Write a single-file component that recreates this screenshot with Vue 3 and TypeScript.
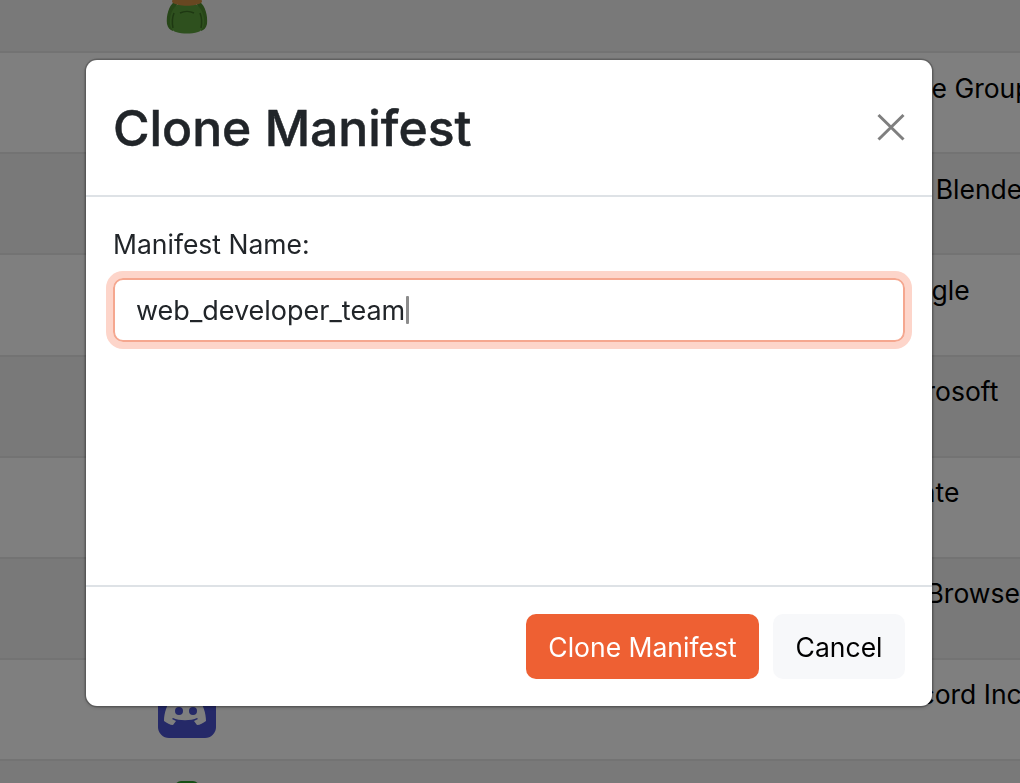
<script setup lang="ts">
interface Row {
  name: string
  icon?: 'frog' | 'discord' | 'green'
}

const rows: Row[] = [
  { name: '', icon: 'frog' },
  { name: 'Code Group' },
  { name: 'The Blender' },
  { name: 'Google' },
  { name: 'Microsoft' },
  { name: 'Monte' },
  { name: 'UC Browser' },
  { name: 'Discord Inc', icon: 'discord' },
  { name: '', icon: 'green' },
]
</script>

<template>
  <div class="page">
    <div class="table">
      <div v-for="(row, i) in rows" :key="i" class="row">
        <div class="icon-cell">
          <svg v-if="row.icon === 'frog'" class="app-icon frog" viewBox="0 0 58 62" aria-hidden="true">
            <path d="M16 30c-5 4-8 13-7 22 1 4 3 6 6 7l4-27z M42 30c5 4 8 13 7 22-1 4-3 6-6 7l-4-27z" fill="#4e8c30" />
            <path d="M29 30c-10 0-16 7-17 17-1 7 2 12 6 13 7 2 15 2 22 0 4-1 7-6 6-13-1-10-7-17-17-17z" fill="#5ca03c" />
            <path d="M16 41c-2 5-2 10-1 15M42 41c2 5 2 10 1 15M22 41c4-2 10-2 14 0" stroke="#3c7024" stroke-width="1.5" fill="none" />
            <path d="M15 24h28l1 6c-5 5-25 5-30 0z" fill="#d08e42" />
          </svg>
          <svg v-else-if="row.icon === 'discord'" class="app-icon" viewBox="0 0 58 58" aria-hidden="true">
            <rect width="58" height="58" rx="11" fill="#4a52d0" />
            <path d="M17 19c4-2 7-3 9-3l1 2h4l1-2c2 0 5 1 9 3 4 6 7 14 7 22-3 2-6 4-9 4l-3-4 4-2-1-1c-6 3-18 3-24 0l-1 1 4 2-3 4c-3 0-6-2-9-4 0-8 3-16 7-22z" fill="#fff" />
            <circle cx="21" cy="31" r="4" fill="#4a52d0" />
            <circle cx="35" cy="31" r="4" fill="#4a52d0" />
          </svg>
          <svg v-else-if="row.icon === 'green'" class="app-icon" viewBox="0 0 58 58" aria-hidden="true">
            <rect x="17" width="24" height="58" rx="6" fill="#2f9e2c" />
          </svg>
        </div>
        <div v-if="row.name" class="name-cell">{{ row.name }}</div>
      </div>
    </div>

    <div class="backdrop">
      <section class="modal" role="dialog" aria-modal="true">
        <header class="modal-header">
          <h1 class="modal-title">Clone Manifest</h1>
          <button class="close" type="button" aria-label="Close">
            <svg viewBox="0 0 28 28" width="28" height="28" aria-hidden="true">
              <path d="M1.5 2l25 24.5M26.5 2l-25 24.5" stroke="#7f7f7f" stroke-width="3" fill="none" />
            </svg>
          </button>
        </header>
        <div class="modal-body">
          <label class="label">Manifest Name:</label>
          <div class="field" role="textbox">
            <span>web_developer_team</span><i class="caret"></i>
          </div>
        </div>
        <footer class="modal-footer">
          <button class="btn primary" type="button">Clone Manifest</button>
          <button class="btn secondary" type="button">Cancel</button>
        </footer>
      </section>
    </div>
  </div>
</template>

<style>
html,
body {
  margin: 0;
  height: 100%;
  overflow: hidden;
  background: #fff;
}
</style>

<style scoped>
.page {
  height: 783px;
  overflow: hidden;
  font-family: Inter, "Liberation Sans", sans-serif;
  color: #000;
}

.table {
  margin-top: -48px;
}

.row {
  box-sizing: border-box;
  height: 101.15px;
  display: flex;
  border-bottom: 2px solid #e6e6e6;
  padding-top: 20px;
}

.row:nth-child(odd) {
  background: #f2f2f2;
}

.icon-cell {
  width: 880px;
  padding-left: 158px;
  box-sizing: border-box;
  flex: none;
}

.app-icon {
  display: block;
  width: 58px;
  height: 58px;
}

.frog {
  height: 62px;
}

.name-cell {
  font-size: 26.5px;
  line-height: 29px;
  padding-top: 0.5px;
  white-space: nowrap;
}

.backdrop {
  position: fixed;
  inset: 0;
  display: flex;
  justify-content: center;
  align-items: flex-start;
  padding: 60px 2px 0 0;
  background: rgba(0, 0, 0, 0.5);
}

.modal {
  box-sizing: border-box;
  width: 846px;
  height: 646px;
  display: flex;
  flex-direction: column;
  background: #fff;
  border-radius: 11px;
  box-shadow: 0 0 0 1.5px rgba(0, 0, 0, 0.2), 0 1px 4px rgba(0, 0, 0, 0.25);
  color: #212529;
}

.modal-header {
  box-sizing: border-box;
  height: 137px;
  flex: none;
  display: flex;
  align-items: center;
  justify-content: space-between;
  padding: 0 27px 0 27px;
  border-bottom: 2px solid #dee2e6;
}

.modal-title {
  margin: 0;
  padding-top: 1px;
  font-size: 49.8px;
  font-weight: 500;
  -webkit-text-stroke: 0.5px #212529;
  line-height: 58px;
}

.close {
  display: block;
  width: 28px;
  height: 28px;
  padding: 0;
  margin-top: -1px;
  border: 0;
  background: none;
}

.close svg {
  display: block;
}

.modal-body {
  flex: 1;
  padding: 33px 27px 0;
}

.label {
  display: block;
  font-size: 26.5px;
  line-height: 29px;
  margin-bottom: 19px;
}

.field {
  box-sizing: border-box;
  height: 64px;
  display: flex;
  align-items: center;
  padding: 0 21px;
  border: 2px solid #f5a78f;
  border-radius: 10px;
  box-shadow: 0 0 0 7px #fdd5ca;
  font-size: 27px;
  color: #212529;
}

.caret {
  display: block;
  width: 3px;
  height: 28px;
  margin-left: 1px;
  background: #8c8c8c;
  border-radius: 1px;
}

.modal-footer {
  box-sizing: border-box;
  height: 121px;
  flex: none;
  display: flex;
  justify-content: flex-end;
  align-items: flex-start;
  gap: 14px;
  padding: 27px 27px 0;
  border-top: 2px solid #dee2e6;
}

.btn {
  height: 65px;
  padding: 0 22.5px;
  border: 0;
  border-radius: 10px;
  font-family: inherit;
  font-size: 26.5px;
}

.primary {
  background: #ee6033;
  color: #fff;
}

.secondary {
  background: #f7f8fa;
  color: #000;
}
</style>
